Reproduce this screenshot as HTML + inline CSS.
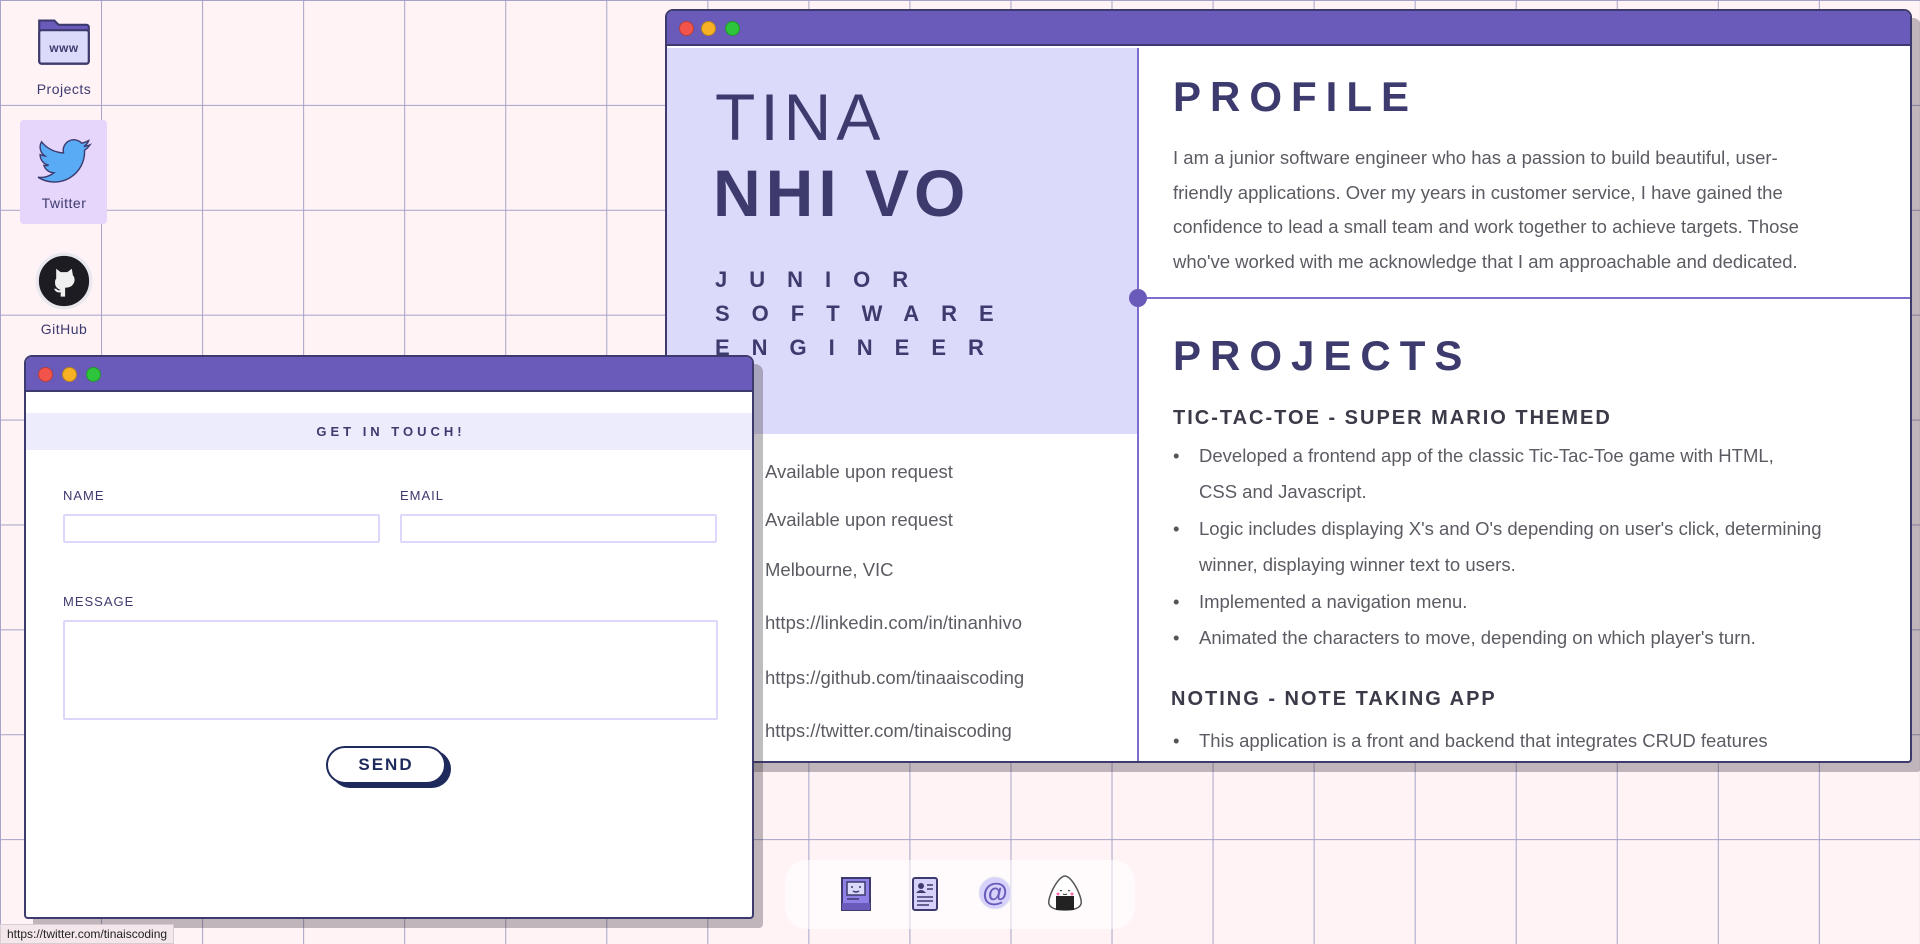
<!DOCTYPE html>
<html><head><meta charset="utf-8"><style>
*{box-sizing:border-box;margin:0;padding:0}
body{width:1920px;height:944px;overflow:hidden;position:relative;font-family:"Liberation Sans",sans-serif;
background-color:#fff3f6;
background-image:linear-gradient(to right,#a5a3c8 1px,transparent 1px),linear-gradient(to bottom,#a5a3c8 1px,transparent 1px);
background-size:101.05px 104.9px;background-position:0 0;}
.ico{position:absolute;text-align:center;width:88px;font-size:14px;color:#3d3a6e;letter-spacing:.5px}
.win{position:absolute;border:2px solid #3d3a6e;border-radius:8px 8px 4px 4px;background:#fff;box-shadow:9px 9px 0 rgba(60,50,60,.32);overflow:hidden}
.bar{height:35px;background:#6a5bbb;border-bottom:2px solid #3d3a6e;position:relative}
.dot{position:absolute;top:10px;width:15px;height:15px;border-radius:50%;border:1px solid rgba(0,0,0,.25)}
.abs{position:absolute;white-space:nowrap}
.p{font-size:18.5px;color:#5b5b63}
.h3{font-size:20px;font-weight:bold;color:#3a3a48;letter-spacing:2px}
.li{font-size:18.5px;color:#5b5b63}
.li:before{content:"•";position:absolute;left:-26px;color:#555}
label{position:absolute;font-size:13px;color:#3d3a6e;letter-spacing:1px}
.inp{position:absolute;border:2px solid #dcd8fb;border-radius:2px;background:#fff}
</style></head><body>

<div class="ico" style="left:20px;top:16px">
<svg width="56" height="50" viewBox="0 0 52 46"><path d="M3 4h14l4 4h26a2 2 0 0 1 2 2v32a2 2 0 0 1-2 2H5a2 2 0 0 1-2-2z" fill="#6a5bbb" stroke="#3d3a6e" stroke-width="2"/><rect x="3" y="13" width="46" height="31" rx="2" fill="#dcdafa" stroke="#3d3a6e" stroke-width="2"/><text x="26" y="33" font-size="11" font-weight="bold" fill="#3d3a6e" text-anchor="middle" font-family="Liberation Sans">www</text></svg>
<div style="margin-top:12px">Projects</div></div>

<div style="position:absolute;left:20px;top:120px;width:87px;height:104px;background:#e6d6fb;border-radius:4px"></div>
<div class="ico" style="left:20px;top:134px">
<svg width="58" height="52" viewBox="0 0 24 22"><path d="M23 4.6a9 9 0 0 1-2.6.7 4.5 4.5 0 0 0 2-2.5 9 9 0 0 1-2.9 1.1 4.5 4.5 0 0 0-7.7 4.1A12.8 12.8 0 0 1 2.5 3.3a4.5 4.5 0 0 0 1.4 6 4.5 4.5 0 0 1-2-.6 4.5 4.5 0 0 0 3.6 4.5 4.5 4.5 0 0 1-2 .1 4.5 4.5 0 0 0 4.2 3.1A9 9 0 0 1 1 18.3a12.8 12.8 0 0 0 19.7-11.4A9 9 0 0 0 23 4.6z" fill="#5aabf5" stroke="#3d3a6e" stroke-width=".6"/></svg>
<div style="margin-top:6px">Twitter</div></div>

<div class="ico" style="left:20px;top:252px">
<svg width="58" height="58" viewBox="0 0 52 52"><circle cx="26" cy="26" r="24" fill="#1c1c22" stroke="#e8e8ee" stroke-width="3"/><path d="M19 15l4 3h6l4-3 1 6c2 2 2 6 0 8-1 2-4 3-7 3v8h-4v-4c-3 1-5-1-6-3l2 0c1 1 2 2 4 1-3-1-5-3-5-6 0-2 0-3 1-4z" fill="#f0f0f0"/></svg>
<div style="margin-top:8px">GitHub</div></div>

<div class="win" style="left:665px;top:9px;width:1247px;height:754px">
<div class="bar"><div class="dot" style="left:12px;background:#f2544c"></div><div class="dot" style="left:34px;background:#f8b125"></div><div class="dot" style="left:58px;background:#2ec43c"></div></div>
<div style="position:absolute;left:0;top:37px;width:471px;height:386px;background:#dcdafa"></div>
<div style="position:absolute;left:470px;top:37px;width:2px;height:720px;background:#7b6ed0"></div>
<div style="position:absolute;left:471px;top:286px;width:780px;height:2px;background:#7b6ed0"></div>
<div style="position:absolute;left:462px;top:278px;width:18px;height:18px;border-radius:50%;background:#6a5bbb"></div>
<div class="abs" style="left:48px;top:68px;font-size:66px;color:#3d3a6e;letter-spacing:5px">TINA</div>
<div class="abs" style="left:46px;top:144px;font-size:66px;font-weight:bold;color:#3d3a6e;letter-spacing:5px">NHI VO</div>
<div class="abs" style="left:48px;top:252px;font-size:22px;font-weight:bold;color:#3d3a6e;letter-spacing:22px;line-height:34px">JUNIOR<br>SOFTWARE<br>ENGINEER</div>
<div class="abs p" style="left:98px;top:452px;line-height:1">Available upon request</div>
<div class="abs p" style="left:98px;top:498px">Available upon request</div>
<div class="abs p" style="left:98px;top:548px">Melbourne, VIC</div>
<div class="abs p" style="left:98px;top:601px">https://linkedin.com/in/tinanhivo</div>
<div class="abs p" style="left:98px;top:656px">https://github.com/tinaaiscoding</div>
<div class="abs p" style="left:98px;top:709px">https://twitter.com/tinaiscoding</div>

<div class="abs" style="left:506px;top:62px;font-size:42px;font-weight:bold;color:#3d3a6e;letter-spacing:9px">PROFILE</div>
<div class="abs p" style="left:506px;top:130px;line-height:34.5px">I am a junior software engineer who has a passion to build beautiful, user-<br>friendly applications. Over my years in customer service, I have gained the<br>confidence to lead a small team and work together to achieve targets. Those<br>who've worked with me acknowledge that I am approachable and dedicated.</div>
<div class="abs" style="left:506px;top:321px;font-size:42px;font-weight:bold;color:#3d3a6e;letter-spacing:9px">PROJECTS</div>
<div class="abs h3" style="left:506px;top:396px">TIC-TAC-TOE - SUPER MARIO THEMED</div>
<div class="abs li" style="left:532px;top:434px">Developed a frontend app of the classic Tic-Tac-Toe game with HTML,</div>
<div class="abs p" style="left:532px;top:470px">CSS and Javascript.</div>
<div class="abs li" style="left:532px;top:507px">Logic includes displaying X's and O's depending on user's click, determining</div>
<div class="abs p" style="left:532px;top:543px">winner, displaying winner text to users.</div>
<div class="abs li" style="left:532px;top:580px">Implemented a navigation menu.</div>
<div class="abs li" style="left:532px;top:616px">Animated the characters to move, depending on which player's turn.</div>
<div class="abs h3" style="left:504px;top:677px">NOTING - NOTE TAKING APP</div>
<div class="abs li" style="left:532px;top:719px">This application is a front and backend that integrates CRUD features</div>
</div>

<div class="win" style="left:24px;top:355px;width:730px;height:564px">
<div class="bar"><div class="dot" style="left:12px;background:#f2544c"></div><div class="dot" style="left:36px;background:#f8b125"></div><div class="dot" style="left:60px;background:#2ec43c"></div></div>
<div style="position:absolute;left:0;top:56px;width:730px;height:37px;background:#ececfc;text-align:center;line-height:37px;font-size:13px;font-weight:bold;color:#3d3a6e;letter-spacing:4px">GET IN TOUCH!</div>
<label style="left:37px;top:131px">NAME</label>
<label style="left:374px;top:131px">EMAIL</label>
<div class="inp" style="left:37px;top:157px;width:317px;height:29px"></div>
<div class="inp" style="left:374px;top:157px;width:317px;height:29px"></div>
<label style="left:37px;top:237px">MESSAGE</label>
<div class="inp" style="left:37px;top:263px;width:655px;height:100px"></div>
<div style="position:absolute;left:305px;top:393px;width:120px;height:38px;border-radius:19px;background:#1f2a5c"></div>
<div style="position:absolute;left:300px;top:389px;width:120px;height:38px;border-radius:19px;background:#fff;border:2px solid #1f2a5c;text-align:center;line-height:34px;font-size:17px;font-weight:bold;color:#1f2a5c;letter-spacing:2px">SEND</div>
</div>

<div style="position:absolute;left:785px;top:860px;width:350px;height:69px;border-radius:22px;background:rgba(255,255,255,.55)"></div>
<svg style="position:absolute;left:840px;top:876px" width="32" height="36" viewBox="0 0 32 36"><rect x="2" y="2" width="28" height="32" fill="#8f80e8" stroke="#3d3a6e" stroke-width="2"/><rect x="7" y="6" width="18" height="13" fill="#dcdafa" stroke="#3d3a6e" stroke-width="1.5"/><path d="M12 10v2M20 10v2M13 15q3 2 6 0" stroke="#3d3a6e" stroke-width="1.5" fill="none"/><rect x="2" y="27" width="28" height="7" fill="#6a5bbb"/><path d="M7 23h12" stroke="#3d3a6e" stroke-width="1.5"/></svg>
<svg style="position:absolute;left:911px;top:876px" width="28" height="36" viewBox="0 0 28 36"><rect x="2" y="2" width="24" height="32" rx="2" fill="#d6d2fb" stroke="#3d3a6e" stroke-width="2"/><circle cx="10" cy="10" r="3" fill="#3d3a6e"/><path d="M5 17q5-6 10 0z" fill="#3d3a6e"/><path d="M16 9h6M16 13h6M6 21h16M6 25h16M6 29h12" stroke="#3d3a6e" stroke-width="1.5"/></svg>
<svg style="position:absolute;left:978px;top:876px" width="34" height="34" viewBox="0 0 34 34"><circle cx="17" cy="17" r="16" fill="#d6d2fb" stroke="#e8e8ee" stroke-width="1"/><text x="17" y="25" font-size="26" text-anchor="middle" fill="#6a5bbb" font-family="Liberation Sans" font-weight="bold">@</text></svg>
<svg style="position:absolute;left:1045px;top:874px" width="40" height="38" viewBox="0 0 40 38"><path d="M20 2C13 2 2 24 4 30q2 6 16 6t16-6C38 24 27 2 20 2z" fill="#fff" stroke="#555" stroke-width="1.5"/><rect x="11" y="22" width="18" height="14" fill="#222"/><path d="M15 17q1-1 2 0M23 17q1-1 2 0M18 20q2 1 4 0" stroke="#333" fill="none"/><circle cx="13" cy="20" r="1.5" fill="#f6a"/><circle cx="27" cy="20" r="1.5" fill="#f6a"/></svg>

<div style="position:absolute;left:0;top:924px;height:20px;padding:0 6px;background:#f3e7ec;border:1px solid #d8cdd2;font-size:12px;line-height:18px;color:#222">https://twitter.com/tinaiscoding</div>
</body></html>
